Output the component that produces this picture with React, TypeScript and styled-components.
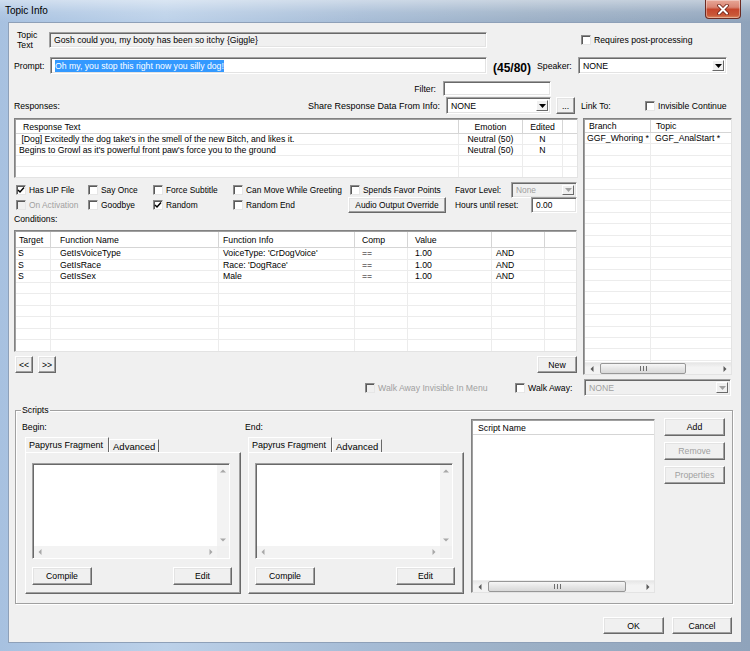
import React from "react";
import styled, { createGlobalStyle } from "styled-components";

const FONT = `"Liberation Sans", Arial, sans-serif`;

const GlobalStyle = createGlobalStyle`
  * { box-sizing: border-box; }
  html, body { margin: 0; padding: 0; background: #fff; }
  body { font-family: ${FONT}; font-size: 8.7px; color: #000; }
`;

const Window = styled.div`
  width: 750px;
  height: 651px;
  display: flex;
  flex-direction: column;
  overflow: hidden;
  background: linear-gradient(90deg, #a7c1e0 0%, #bcd1e9 22%, #a6bcd6 48%, #9cb0c6 70%, #8fa3bb 100%);
`;

const TitleBar = styled.div`
  height: 22px;
  flex: none;
  display: flex;
  align-items: flex-start;
  padding-left: 5px;
  background: linear-gradient(180deg, rgba(255, 255, 255, 0.45) 0%, rgba(255, 255, 255, 0.12) 55%, rgba(255, 255, 255, 0) 100%);
`;

const Title = styled.span`
  font-size: 10px;
  line-height: 22px;
  color: #000;
`;

const CloseButton = styled.div`
  margin-left: auto;
  margin-right: 9px;
  width: 36px;
  height: 19px;
  display: flex;
  align-items: center;
  justify-content: center;
  border: 1px solid #6b2a22;
  border-top: none;
  border-radius: 0 0 4px 4px;
  background: linear-gradient(180deg, #e8a797 0%, #d98573 40%, #c6462c 52%, #c95838 85%, #dd8a60 100%);
  box-shadow: inset 0 0 0 1px rgba(255, 255, 255, 0.35);
`;

const Frame = styled.div`
  flex: 1;
  display: flex;
  padding: 0 8px 8px 8px;
`;

const Client = styled.div`
  flex: 1;
  background: #f0f0f0;
  border: 1px solid #8ea0b8;
  padding: 0 8px 0 5px;
  display: flex;
  flex-direction: column;
`;

/* ---------- generic controls ---------- */

const Row = styled.div<{ $mt?: number; $h: number }>`
  display: flex;
  align-items: center;
  flex: none;
  margin-top: ${({ $mt }) => $mt ?? 0}px;
  height: ${({ $h }) => $h}px;
`;

const Slot = styled.div<{ $ml?: number; $w?: number }>`
  display: flex;
  align-items: center;
  flex: none;
  margin-left: ${({ $ml }) => $ml ?? 0}px;
  width: ${({ $w }) => ($w ? `${$w}px` : "auto")};
  white-space: nowrap;
  overflow: hidden;
`;

const Field = styled.div<{ $w: number; $h?: number; $readonly?: boolean }>`
  width: ${({ $w }) => $w}px;
  height: ${({ $h }) => $h ?? 17}px;
  flex: none;
  background: ${({ $readonly }) => ($readonly ? "#f0f0f0" : "#fff")};
  border: 1px solid;
  border-color: #a0a0a0 #fff #fff #a0a0a0;
  box-shadow: inset 1px 1px #696969, inset -1px -1px #e3e3e3;
  display: flex;
  align-items: center;
  padding: 0 3px 0 4px;
  white-space: nowrap;
  overflow: hidden;
`;

const Selected = styled.span`
  background: #3399ff;
  color: #fff;
  line-height: 12px;
`;

const Counter = styled.span`
  margin: 4px 0 0 6px;
  font-size: 12px;
  font-weight: bold;
  width: 44px;
  flex: none;
`;

const Label = styled.span<{ $w?: number; $disabled?: boolean }>`
  flex: none;
  width: ${({ $w }) => ($w ? `${$w}px` : "auto")};
  color: ${({ $disabled }) => ($disabled ? "#a0a0a0" : "#000")};
  white-space: nowrap;
`;

const CheckLabel = styled.span<{ $disabled?: boolean }>`
  display: inline-flex;
  align-items: center;
  gap: 3px;
  white-space: nowrap;
  color: ${({ $disabled }) => ($disabled ? "#a0a0a0" : "#000")};
`;

const CheckBox = styled.span<{ $disabled?: boolean }>`
  width: 10px;
  height: 10px;
  flex: none;
  display: flex;
  align-items: center;
  justify-content: center;
  background: ${({ $disabled }) => ($disabled ? "#f0f0f0" : "#fff")};
  border: 1px solid;
  border-color: #8a8a8a #e6e6e6 #e6e6e6 #8a8a8a;
  box-shadow: inset 1px 1px #5a5a5a;
`;

function Check({ label, checked, disabled }: { label: string; checked?: boolean; disabled?: boolean }) {
  return (
    <CheckLabel $disabled={disabled}>
      <CheckBox $disabled={disabled}>
        {checked && (
          <svg width="8" height="8" viewBox="0 0 8 8">
            <path d="M1 4 L3 6 L7 1.5" fill="none" stroke="#000" strokeWidth="1.5" />
          </svg>
        )}
      </CheckBox>
      {label}
    </CheckLabel>
  );
}

const ComboField = styled.div<{ $w: number; $h?: number; $disabled?: boolean }>`
  width: ${({ $w }) => $w}px;
  height: ${({ $h }) => $h ?? 17}px;
  flex: none;
  display: flex;
  align-items: stretch;
  background: ${({ $disabled }) => ($disabled ? "#f0f0f0" : "#fff")};
  color: ${({ $disabled }) => ($disabled ? "#a0a0a0" : "#000")};
  border: 1px solid;
  border-color: #a0a0a0 #fff #fff #a0a0a0;
  box-shadow: inset 1px 1px #696969, inset -1px -1px #e3e3e3;
  padding: 2px 2px 2px 4px;
`;

const ComboValue = styled.span`
  flex: 1;
  display: flex;
  align-items: center;
  white-space: nowrap;
`;

const ComboArrow = styled.span`
  width: 12px;
  flex: none;
  display: flex;
  align-items: center;
  justify-content: center;
  background: #f0f0f0;
  border: 1px solid;
  border-color: #fff #696969 #696969 #fff;
`;

function Combo({ w, h, value, disabled }: { w: number; h?: number; value: string; disabled?: boolean }) {
  return (
    <ComboField $w={w} $h={h} $disabled={disabled}>
      <ComboValue>{value}</ComboValue>
      <ComboArrow>
        <svg width="7" height="4" viewBox="0 0 7 4">
          <polygon points="0,0 7,0 3.5,4" fill={disabled ? "#a0a0a0" : "#000"} />
        </svg>
      </ComboArrow>
    </ComboField>
  );
}

const Button = styled.div<{ $w: number; $h?: number; $disabled?: boolean; $ml?: number }>`
  width: ${({ $w }) => $w}px;
  height: ${({ $h }) => $h ?? 18}px;
  flex: none;
  margin-left: ${({ $ml }) => $ml ?? 0}px;
  display: flex;
  align-items: center;
  justify-content: center;
  background: #f0f0f0;
  color: ${({ $disabled }) => ($disabled ? "#a0a0a0" : "#000")};
  border: 1px solid;
  border-color: #fff #696969 #696969 #fff;
  box-shadow: inset -1px -1px #a0a0a0, inset 1px 1px #e3e3e3;
  white-space: nowrap;
`;

/* ---------- scrollbars ---------- */

function Tri({ dir, color }: { dir: "left" | "right" | "up" | "down"; color: string }) {
  const pts = {
    left: "3.5,0 3.5,6 0.5,3",
    right: "0.5,0 0.5,6 3.5,3",
    up: "0,3.5 6,3.5 3,0.5",
    down: "0,0.5 6,0.5 3,3.5",
  }[dir];
  const horiz = dir === "left" || dir === "right";
  return (
    <svg width={horiz ? 4 : 6} height={horiz ? 6 : 4} viewBox={horiz ? "0 0 4 6" : "0 0 6 4"}>
      <polygon points={pts} fill={color} />
    </svg>
  );
}

const HScroll = styled.div`
  height: 12px;
  flex: none;
  display: flex;
  align-items: stretch;
  background: linear-gradient(180deg, #e6e6e6 0%, #f3f3f3 40%, #f3f3f3 100%);
  border-top: 1px solid #ededed;
`;

const ScrollArrow = styled.span`
  width: 13px;
  flex: none;
  display: flex;
  align-items: center;
  justify-content: center;
`;

const Thumb = styled.span<{ $left: number; $w: number }>`
  margin-left: ${({ $left }) => $left}px;
  width: ${({ $w }) => $w}px;
  flex: none;
  display: flex;
  align-items: center;
  justify-content: center;
  border: 1px solid #979797;
  border-radius: 2px;
  background: linear-gradient(180deg, #f6f6f6 0%, #e6e6e6 50%, #d8d8d8 100%);
`;

const Spacer = styled.span`
  flex: 1;
`;

function HScrollBar({ thumbLeft, thumbWidth }: { thumbLeft: number; thumbWidth: number }) {
  return (
    <HScroll>
      <ScrollArrow>
        <Tri dir="left" color="#5a5a5a" />
      </ScrollArrow>
      <Thumb $left={thumbLeft} $w={thumbWidth}>
        <svg width="7" height="5" viewBox="0 0 7 5">
          <path d="M0.5 0 V5 M3.5 0 V5 M6.5 0 V5" stroke="#6e6e6e" strokeWidth="1" />
        </svg>
      </Thumb>
      <Spacer />
      <ScrollArrow>
        <Tri dir="right" color="#5a5a5a" />
      </ScrollArrow>
    </HScroll>
  );
}

/* ---------- list views ---------- */

type Column = { title: string; width: number; align?: "left" | "center"; hpad?: number; bpad?: number };

const ListBox = styled.div<{ $w: number; $h: number; $ml?: number; $mt?: number }>`
  width: ${({ $w }) => $w}px;
  height: ${({ $h }) => $h}px;
  margin-left: ${({ $ml }) => $ml ?? 0}px;
  margin-top: ${({ $mt }) => $mt ?? 0}px;
  flex: none;
  background: #fff;
  border: 1px solid;
  border-color: #828282 #e3e3e3 #e3e3e3 #828282;
  box-shadow: inset 1px 1px #a0a0a0;
  padding: 1px 0 0 1px;
  display: flex;
  flex-direction: column;
  overflow: hidden;
`;

const GridRow = styled.div<{ $cols: string; $h: number; $line: string }>`
  display: grid;
  grid-template-columns: ${({ $cols }) => $cols};
  height: ${({ $h }) => $h}px;
  flex: none;
  border-bottom: 1px solid ${({ $line }) => $line};
`;

const HeadCell = styled.div<{ $align?: string; $pad?: number }>`
  display: flex;
  align-items: center;
  justify-content: ${({ $align }) => ($align === "center" ? "center" : "flex-start")};
  padding-left: ${({ $pad }) => $pad ?? 4}px;
  border-right: 1px solid #d5d5d5;
  white-space: nowrap;
  overflow: hidden;
`;

const BodyCell = styled.div<{ $align?: string; $pad?: number; $lines: boolean }>`
  display: flex;
  align-items: center;
  justify-content: ${({ $align }) => ($align === "center" ? "center" : "flex-start")};
  padding-left: ${({ $pad }) => $pad ?? 4}px;
  border-right: 1px solid ${({ $lines }) => ($lines ? "#ececec" : "transparent")};
  white-space: pre;
  overflow: hidden;
`;

const ListBody = styled.div`
  flex: 1;
  overflow: hidden;
  display: flex;
  flex-direction: column;
`;

function ListView({
  columns,
  rows,
  fill,
  w,
  h,
  headH,
  rowH,
  ml,
  mt,
  lines = true,
  scroll,
}: {
  columns: Column[];
  rows: string[][];
  fill: number;
  w: number;
  h: number;
  headH: number;
  rowH: number;
  ml?: number;
  mt?: number;
  lines?: boolean;
  scroll?: { left: number; width: number };
}) {
  const cols = columns.map((c) => `${c.width}px`).join(" ");
  const all = [...rows];
  while (all.length < fill) all.push(columns.map(() => ""));
  return (
    <ListBox $w={w} $h={h} $ml={ml} $mt={mt}>
      <GridRow $cols={cols} $h={headH} $line="#d5d5d5">
        {columns.map((c, i) => (
          <HeadCell key={i} $align={c.align} $pad={c.hpad}>
            {c.title}
          </HeadCell>
        ))}
      </GridRow>
      <ListBody>
        {lines &&
          all.map((r, i) => (
            <GridRow key={i} $cols={cols} $h={rowH} $line="#ececec">
              {columns.map((c, j) => (
                <BodyCell key={j} $align={c.align} $pad={c.bpad} $lines={lines}>
                  {r[j]}
                </BodyCell>
              ))}
            </GridRow>
          ))}
      </ListBody>
      {scroll && <HScrollBar thumbLeft={scroll.left} thumbWidth={scroll.width} />}
    </ListBox>
  );
}

/* ---------- layout pieces ---------- */

const TopicLabel = styled.div`
  width: 35px;
  flex: none;
  padding-left: 3px;
  line-height: 10px;
`;

const MainGrid = styled.div`
  display: grid;
  grid-template-columns: 564px 155px;
  margin-top: 7px;
  flex: none;
`;

const Column = styled.div`
  display: flex;
  flex-direction: column;
`;

const FilterRow = styled.div`
  height: 15px;
  display: flex;
  align-items: center;
  justify-content: flex-end;
  padding-right: 27px;
  gap: 7px;
`;

const ShareRow = styled.div`
  height: 17px;
  margin-top: 1px;
  display: flex;
  align-items: center;
  padding-right: 3px;
  gap: 5px;
`;

const ShareLabel = styled.span`
  margin-left: auto;
  margin-right: 1px;
  font-size: 9px;
  white-space: nowrap;
`;

const OptionsGrid = styled.div`
  display: grid;
  grid-template-columns: 72px 65px 80px 117px 105px 1fr;
  grid-auto-rows: 15px;
  align-items: center;
  margin-top: 4px;
  padding-left: 2px;
  font-size: 8.4px;
`;

const Cell = styled.div<{ $ml?: number }>`
  display: flex;
  align-items: center;
  white-space: nowrap;
  overflow: hidden;
  margin-left: ${({ $ml }) => $ml ?? 0}px;
`;

const EdgeCell = styled.div`
  display: flex;
  align-items: center;
  justify-content: space-between;
  padding-right: 1px;
  white-space: nowrap;
`;

const SectionLabel = styled.div<{ $mt?: number }>`
  line-height: 12px;
  margin-top: ${({ $mt }) => $mt ?? 0}px;
  flex: none;
`;

const NavRow = styled.div`
  height: 17px;
  margin-top: 4px;
  display: flex;
  align-items: center;
  padding-left: 1px;
  gap: 5px;
`;

const LinkRow = styled.div`
  height: 17px;
  margin-top: 16px;
  display: flex;
  align-items: center;
  padding-left: 3px;
`;

const GroupBox = styled.div`
  margin: 14px 0 0 1px;
  width: 718px;
  height: 194px;
  flex: none;
  border: 1px solid #a0a0a0;
  box-shadow: inset 1px 1px #fff, 1px 1px #fff;
  display: flex;
  flex-direction: column;
  padding: 0 7px 0 6px;
`;

const Legend = styled.div`
  align-self: flex-start;
  margin: -7px 0 0 -1px;
  padding: 0 1px;
  height: 12px;
  line-height: 12px;
  background: #f0f0f0;
`;

const ScriptsRow = styled.div`
  display: flex;
  margin-top: 2px;
`;

const ScriptBlock = styled.div<{ $ml?: number }>`
  display: flex;
  flex-direction: column;
  width: 219px;
  flex: none;
  margin-left: ${({ $ml }) => $ml ?? 0}px;
`;

const TabStrip = styled.div`
  display: flex;
  align-items: flex-end;
  height: 15px;
  margin: 4px 0 0 3px;
`;

const Tab = styled.div<{ $active?: boolean }>`
  height: ${({ $active }) => ($active ? 15 : 13)}px;
  display: flex;
  align-items: center;
  padding: 0 ${({ $active }) => ($active ? 5 : 3)}px 0 3px;
  font-size: ${({ $active }) => ($active ? 9 : 9.5)}px;
  background: #f0f0f0;
  border: 1px solid;
  border-bottom: none;
  border-color: #fff #696969 transparent #fff;
  white-space: nowrap;
`;

const TabPanel = styled.div`
  width: 216px;
  height: 142px;
  margin-left: 3px;
  border: 1px solid;
  border-color: #fff #696969 #696969 #fff;
  box-shadow: inset -1px -1px #a0a0a0;
  padding: 10px 0 0 6px;
  display: flex;
  flex-direction: column;
`;

const FragmentBox = styled.div`
  width: 198px;
  height: 96px;
  border: 1px solid;
  border-color: #a0a0a0 #fff #fff #a0a0a0;
  box-shadow: inset 1px 1px #696969;
  background: #fff;
  padding: 1px 0 0 1px;
  display: grid;
  grid-template-columns: 1fr 12px;
  grid-template-rows: 1fr 12px;
`;

const VScroll = styled.div`
  background: #f3f3f3;
  display: flex;
  flex-direction: column;
  justify-content: space-between;
  align-items: center;
  padding: 4px 0;
`;

const FragHScroll = styled.div`
  background: #f3f3f3;
  display: flex;
  justify-content: space-between;
  align-items: center;
  padding: 0 4px;
`;

const Corner = styled.div`
  background: #f0f0f0;
`;

const ButtonPair = styled.div`
  width: 200px;
  margin-top: 8px;
  display: flex;
  justify-content: space-between;
`;

const SideButtons = styled.div`
  display: flex;
  flex-direction: column;
  gap: 6px;
  margin-left: 9px;
`;

const Footer = styled.div`
  margin-top: 13px;
  display: flex;
  justify-content: flex-end;
  gap: 8px;
  padding-right: 1px;
`;

function ScriptPanel({ label, ml }: { label: string; ml?: number }) {
  return (
    <ScriptBlock $ml={ml}>
      <SectionLabel $mt={3}>{label}</SectionLabel>
      <TabStrip>
        <Tab $active>Papyrus Fragment</Tab>
        <Tab>Advanced</Tab>
      </TabStrip>
      <TabPanel>
        <FragmentBox>
          <div />
          <VScroll>
            <Tri dir="up" color="#a8a8a8" />
            <Tri dir="down" color="#a8a8a8" />
          </VScroll>
          <FragHScroll>
            <Tri dir="left" color="#a8a8a8" />
            <Tri dir="right" color="#a8a8a8" />
          </FragHScroll>
          <Corner />
        </FragmentBox>
        <ButtonPair>
          <Button $w={60}>Compile</Button>
          <Button $w={59}>Edit</Button>
        </ButtonPair>
      </TabPanel>
    </ScriptBlock>
  );
}

const responseCols: Column[] = [
  { title: "Response Text", width: 443, hpad: 7, bpad: 3 },
  { title: "Emotion", width: 64, align: "center", hpad: 0, bpad: 0 },
  { title: "Edited", width: 40, align: "center", hpad: 0, bpad: 0 },
  { title: "", width: 20 },
];

const responseRows = [
  [" [Dog] Excitedly the dog take's in the smell of the new Bitch, and likes it.", "Neutral (50)", "N", ""],
  ["Begins to Growl as it's powerful front paw's force you to the ground", "Neutral (50)", "N", ""],
];

const conditionCols: Column[] = [
  { title: "Target", width: 35, hpad: 3, bpad: 2 },
  { title: "Function Name", width: 168, hpad: 9, bpad: 9 },
  { title: "Function Info", width: 136, hpad: 4, bpad: 4 },
  { title: "Comp", width: 53, hpad: 7, bpad: 7 },
  { title: "Value", width: 84, hpad: 7, bpad: 7 },
  { title: "", width: 53, hpad: 4, bpad: 4 },
  { title: "", width: 40 },
];

const conditionRows = [
  ["S", "GetIsVoiceType", "VoiceType: 'CrDogVoice'", "==", "1.00", "AND", ""],
  ["S", "GetIsRace", "Race: 'DogRace'", "==", "1.00", "AND", ""],
  ["S", "GetIsSex", "Male", "==", "1.00", "AND", ""],
];

const linkCols: Column[] = [
  { title: "Branch", width: 66, hpad: 4, bpad: 2 },
  { title: "Topic", width: 90, hpad: 5, bpad: 4 },
];

export default function App() {
  return (
    <>
      <GlobalStyle />
      <Window>
        <TitleBar>
          <Title>Topic Info</Title>
          <CloseButton>
            <svg width="12" height="11" viewBox="0 0 12 11">
              <path d="M2 1.5 L10 9.5 M10 1.5 L2 9.5" stroke="#6b1d12" strokeWidth="3.6" strokeLinecap="round" />
              <path d="M2 1.5 L10 9.5 M10 1.5 L2 9.5" stroke="#fff" strokeWidth="2" strokeLinecap="round" />
            </svg>
          </CloseButton>
        </TitleBar>
        <Frame>
          <Client>
            <Row $mt={7} $h={20}>
              <TopicLabel>
                Topic
                <br />
                Text
              </TopicLabel>
              <Field $w={438} $h={16} $readonly>
                Gosh could you, my booty has been so itchy {"{Giggle}"}
              </Field>
              <Slot $ml={94}>
                <Check label="Requires post-processing" />
              </Slot>
            </Row>

            <Row $mt={7} $h={17}>
              <Label $w={36}>Prompt:</Label>
              <Field $w={437}>
                <Selected>Oh my, you stop this right now you silly dog!</Selected>
              </Field>
              <Counter>(45/80)</Counter>
              <Label $w={41}>Speaker:</Label>
              <Combo w={149} value="NONE" />
            </Row>

            <MainGrid>
              <Column>
                <FilterRow>
                  <Label>Filter:</Label>
                  <Field $w={108} $h={15} />
                </FilterRow>
                <ShareRow>
                  <Label>Responses:</Label>
                  <ShareLabel>Share Response Data From Info:</ShareLabel>
                  <Combo w={105} value="NONE" />
                  <Button $w={19} $h={17}>
                    ...
                  </Button>
                </ShareRow>
                <ListView columns={responseCols} rows={responseRows} fill={5} w={564} h={60} mt={4} headH={14} rowH={11} />

                <OptionsGrid>
                  <Cell>
                    <Check label="Has LIP File" checked />
                  </Cell>
                  <Cell>
                    <Check label="Say Once" />
                  </Cell>
                  <Cell>
                    <Check label="Force Subtitle" />
                  </Cell>
                  <Cell>
                    <Check label="Can Move While Greeting" />
                  </Cell>
                  <Cell>
                    <Check label="Spends Favor Points" />
                  </Cell>
                  <EdgeCell>
                    <Label>Favor Level:</Label>
                    <Combo w={66} h={16} value="None" disabled />
                  </EdgeCell>
                  <Cell>
                    <Check label="On Activation" disabled />
                  </Cell>
                  <Cell>
                    <Check label="Goodbye" />
                  </Cell>
                  <Cell>
                    <Check label="Random" checked />
                  </Cell>
                  <Cell>
                    <Check label="Random End" />
                  </Cell>
                  <Cell $ml={-2}>
                    <Button $w={98} $h={16}>
                      Audio Output Override
                    </Button>
                  </Cell>
                  <EdgeCell>
                    <Label>Hours until reset:</Label>
                    <Field $w={46} $h={16}>
                      0.00
                    </Field>
                  </EdgeCell>
                </OptionsGrid>

                <SectionLabel $mt={1}>Conditions:</SectionLabel>
                <ListView columns={conditionCols} rows={conditionRows} fill={10} w={563} h={122} mt={5} headH={16} rowH={11.5} />

                <NavRow>
                  <Button $w={18} $h={17}>
                    {"<<"}
                  </Button>
                  <Button $w={18} $h={17}>
                    {">>"}
                  </Button>
                  <Button $w={40} $h={17} $ml={476}>
                    New
                  </Button>
                </NavRow>
              </Column>

              <Column>
                <LinkRow>
                  <Label $w={64}>Link To:</Label>
                  <Check label="Invisible Continue" />
                </LinkRow>
                <ListView
                  columns={linkCols}
                  rows={[["GGF_Whoring *", "GGF_AnalStart *"]]}
                  fill={22}
                  w={149}
                  h={257}
                  ml={5}
                  mt={4}
                  headH={13}
                  rowH={11.4}
                  scroll={{ left: 2, width: 86 }}
                />
              </Column>
            </MainGrid>

            <Row $mt={4} $h={17}>
              <Slot $ml={351} $w={150}>
                <Check label="Walk Away Invisible In Menu" disabled />
              </Slot>
              <Slot $w={69}>
                <Check label="Walk Away:" />
              </Slot>
              <Combo w={147} value="NONE" disabled />
            </Row>

            <GroupBox>
              <Legend>Scripts</Legend>
              <ScriptsRow>
                <ScriptPanel label="Begin:" />
                <ScriptPanel label="End:" ml={4} />
                <ListView
                  columns={[{ title: "Script Name", width: 182, hpad: 5 }]}
                  rows={[]}
                  fill={0}
                  lines={false}
                  w={184}
                  h={174}
                  ml={7}
                  mt={1}
                  headH={14}
                  rowH={11}
                  scroll={{ left: 2, width: 138 }}
                />
                <SideButtons>
                  <Button $w={61}>Add</Button>
                  <Button $w={61} $disabled>
                    Remove
                  </Button>
                  <Button $w={61} $disabled>
                    Properties
                  </Button>
                </SideButtons>
              </ScriptsRow>
            </GroupBox>

            <Footer>
              <Button $w={61} $h={17}>
                OK
              </Button>
              <Button $w={60} $h={17}>
                Cancel
              </Button>
            </Footer>
          </Client>
        </Frame>
      </Window>
    </>
  );
}
